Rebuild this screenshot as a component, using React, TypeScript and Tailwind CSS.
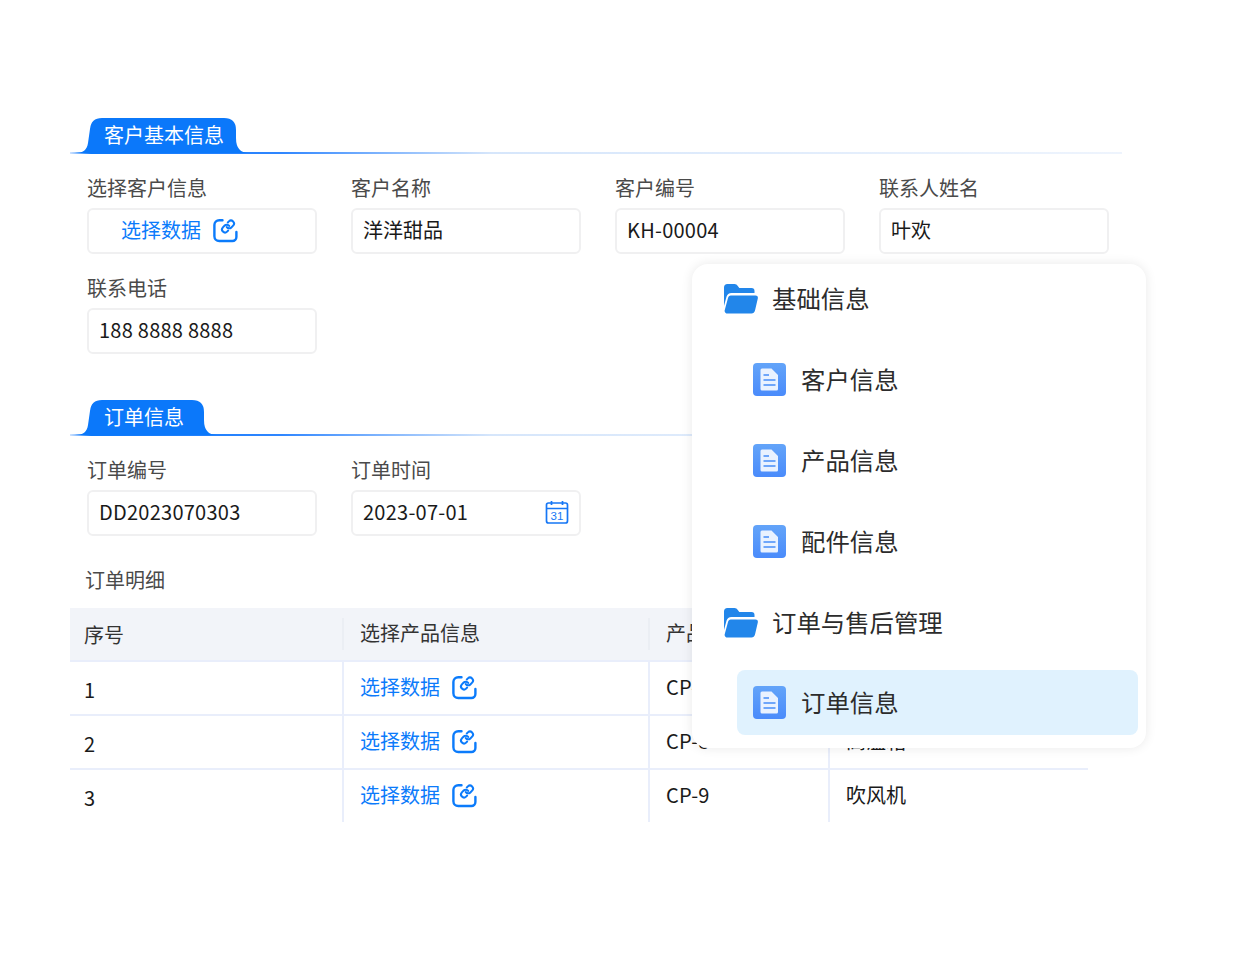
import React from "react";

const LinkIcon = () => (
  <svg viewBox="0 0 25 25" className="w-[25px] h-[25px] shrink-0" fill="none" stroke="#0b7bfb" strokeWidth="2.4" strokeLinecap="round" strokeLinejoin="round">
    <path d="M9.500 2.200H6.200a4.800 4.800 0 0 0-4.800 4.800v11.200a4.800 4.800 0 0 0 4.800 4.800h13.200a4 4 0 0 0 4-4v-5" />
    <g transform="translate(7.800 1.300) scale(.6)" strokeWidth="3.400">
      <path d="M10 13a5 5 0 0 0 7.540.54l3-3a5 5 0 0 0-7.070-7.070l-1.720 1.710" />
      <path d="M14 11a5 5 0 0 0-7.540-.54l-3 3a5 5 0 0 0 7.070 7.070l1.710-1.710" />
    </g>
  </svg>
);

const CalendarIcon = () => (
  <svg viewBox="0 0 24 24" className="w-[24px] h-[24px]" fill="none" stroke="#1677f5" strokeWidth="1.7">
    <rect x="1.500" y="3" width="21" height="20" rx="2" />
    <path d="M1.500 8.500h21M6.500 1v4M17.500 1v4" />
    <text x="12" y="20" textAnchor="middle" fontSize="11.500" fill="#1677f5" stroke="none" fontFamily="Liberation Sans, sans-serif">31</text>
  </svg>
);

const FolderIcon = () => (
  <svg viewBox="0 0 34 30" className="w-[34px] h-[30px] shrink-0">
    <path d="M0 3.500A3.500 3.500 0 0 1 3.500 0h7c1.500 0 2.500.8 3.300 2l1.500 2h12.200a3 3 0 0 1 3 3v2H7.500c-2.700 0-4.300 1.300-5 3.800L0 22z" fill="#2286ea" />
    <path d="M6.800 11.500h24.700c1.700 0 2.700 1.200 2.300 3l-2.800 12c-.5 2-1.800 3-3.500 3H3.500c-2 0-3.200-1.400-2.800-3.300L4 14c.4-1.600 1.300-2.500 2.800-2.500z" fill="#2286ea" />
  </svg>
);

const DocIcon = () => (
  <svg viewBox="0 0 33 33" className="w-[33px] h-[33px] shrink-0">
    <defs>
      <linearGradient id="doc-bg" x1="0" y1="0" x2="0" y2="1">
        <stop offset="0" stopColor="#63a4f9" />
        <stop offset="1" stopColor="#4a8bfb" />
      </linearGradient>
    </defs>
    <rect width="33" height="33" rx="4" fill="url(#doc-bg)" />
    <path d="M9 5.500h9.500l6.500 6.500v14a1.500 1.500 0 0 1-1.500 1.500H9A1.500 1.500 0 0 1 7.500 26V7A1.500 1.500 0 0 1 9 5.500z" fill="#e9f2ff" />
    <path d="M10.500 12h5.500M10.500 17h12M10.500 22h12" stroke="#6ea6fa" strokeWidth="1.800" />
  </svg>
);

const SectionTitle = ({ title, right }: { title: string; right: number }) => (
  <div className="w-[1052px]">
    <div className="relative h-[34px]">
      <svg className="absolute left-0 top-0 h-[36px] w-[300px]" viewBox="0 0 300 36">
        <path
          d={`M5 35C13 35 17 32 18 25L20 11Q21 0 32 0H${right - 12}Q${right} 0 ${right} 12V20Q${right} 35 ${right + 13} 35Z`}
          fill="#0b78fa"
        />
      </svg>
      <span className="absolute left-[34px] top-0 text-[20px] leading-[34px] text-white">{title}</span>
    </div>
    <div className="h-[2px] bg-[linear-gradient(90deg,#cfe3ff_0%,#0b78fa_2%,#2f86ff_20%,#d6e6fb_40%,#eef4fd_100%)]" />
  </div>
);

const Field = ({ label, children }: { label: string; children: React.ReactNode }) => (
  <div className="w-[230px]">
    <div className="text-[20px] leading-[30px] h-[30px] text-[#4a4a4a]">{label}</div>
    <div className="mt-[5px] h-[46px] flex items-center border-2 border-[#f0f0f1] rounded-[6px] px-[10px] pb-[2px] text-[20px] text-[#1a1a1a]">
      {children}
    </div>
  </div>
);

const Latin = ({ children }: { children: React.ReactNode }) => (
  <span className="tracking-[0.25px]">{children}</span>
);

const PickData = () => (
  <div className="flex items-center gap-[12px] text-[20px] text-[#0b7bfb]">
    <span>选择数据</span>
    <LinkIcon />
  </div>
);

const rows = [
  { no: "1", code: "CP-7", name: "电热水壶" },
  { no: "2", code: "CP-8", name: "高温箱" },
  { no: "3", code: "CP-9", name: "吹风机" },
];

const MenuRow = ({ label, active, className }: { label: string; active?: boolean; className?: string }) => (
  <div className={`h-[65px] ml-[45px] mr-[8px] pl-[16px] flex items-center gap-[15px] rounded-[8px] ${active ? "bg-[#e0f2fe]" : ""} ${className ?? ""}`}>
    <DocIcon />
    <span className={`text-[24.4px] leading-[32px] text-[#2c2c2c] ${active ? "pb-[1px]" : "pb-[2px]"}`}>{label}</span>
  </div>
);

const MenuGroup = ({ label }: { label: string }) => (
  <div className="h-[65px] pl-[32px] flex items-center gap-[14px]">
    <FolderIcon />
    <span className="text-[24.4px] leading-[32px] pb-[2px] text-[#2c2c2c]">{label}</span>
  </div>
);

export default function App() {
  return (
    <div className="relative w-[1241px] h-[980px] overflow-hidden bg-white pt-[118px] pl-[70px] font-['Noto_Sans_CJK_SC','Noto_Sans',sans-serif]">
      <SectionTitle title="客户基本信息" right={166} />

      <div className="ml-[17px] mt-[19px] flex flex-wrap gap-x-[34px] gap-y-[19px] w-[1030px]">
        <Field label="选择客户信息">
          <div className="pl-[22px]">
            <PickData />
          </div>
        </Field>
        <Field label="客户名称">洋洋甜品</Field>
        <Field label="客户编号"><Latin>KH-00004</Latin></Field>
        <Field label="联系人姓名">叶欢</Field>
        <Field label="联系电话"><Latin>188 8888 8888</Latin></Field>
      </div>

      <div className="mt-[46px]">
        <SectionTitle title="订单信息" right={134} />
      </div>

      <div className="ml-[17px] mt-[19px] flex gap-x-[34px]">
        <Field label="订单编号"><Latin>DD2023070303</Latin></Field>
        <Field label="订单时间">
          <div className="flex-1 flex items-center justify-between">
            <Latin>2023-07-01</Latin>
            <CalendarIcon />
          </div>
        </Field>
      </div>

      <div className="ml-[15px] mt-[29px] h-[30px] text-[20px] leading-[30px] text-[#4a4a4a]">订单明细</div>

      <div className="mt-[13px] w-[1018px] text-[20px] text-[#1a1a1a]">
        <div className="h-[54px] flex items-center bg-[#f2f4f9] border-b-2 border-[#e9eefb] text-[#333333]">
          <div className="w-[272px] pl-[14px] pt-[2px]">序号</div>
          <div className="w-[306px] h-[32px] flex items-center pl-[16px] pb-[2px] border-l-2 border-[#ebeef4]">选择产品信息</div>
          <div className="w-[180px] h-[32px] flex items-center pl-[16px] pb-[2px] border-l-2 border-[#ebeef4]">产品编号</div>
          <div className="flex-1 h-[32px] flex items-center pl-[16px] pb-[2px] border-l-2 border-[#ebeef4]">产品名称</div>
        </div>
        {rows.map((r, i) => (
          <div key={r.no} className={`flex ${i < 2 ? "h-[54px] border-b-2 border-[#e9eefb]" : "h-[52px]"}`}>
            <div className="w-[272px] pl-[14px] pt-[13px] leading-[30px]">{r.no}</div>
            <div className="w-[306px] flex items-center pl-[16px] pb-[2px] border-l-2 border-[#e9eefb]">
              <PickData />
            </div>
            <div className="w-[180px] flex items-center pl-[16px] pb-[2px] border-l-2 border-[#e9eefb]"><Latin>{r.code}</Latin></div>
            <div className="flex-1 flex items-center pl-[16px] pb-[2px] border-l-2 border-[#e9eefb]">{r.name}</div>
          </div>
        ))}
      </div>

      <div className="absolute left-[692px] top-[264px] w-[454px] h-[484px] pt-[2px] rounded-[16px] bg-white shadow-[0_0_12px_rgba(0,0,0,0.09)] flex flex-col gap-[16px]">
        <MenuGroup label="基础信息" />
        <MenuRow label="客户信息" />
        <MenuRow label="产品信息" />
        <MenuRow label="配件信息" />
        <MenuGroup label="订单与售后管理" />
        <MenuRow label="订单信息" active className="-mt-[1px]" />
      </div>
    </div>
  );
}
